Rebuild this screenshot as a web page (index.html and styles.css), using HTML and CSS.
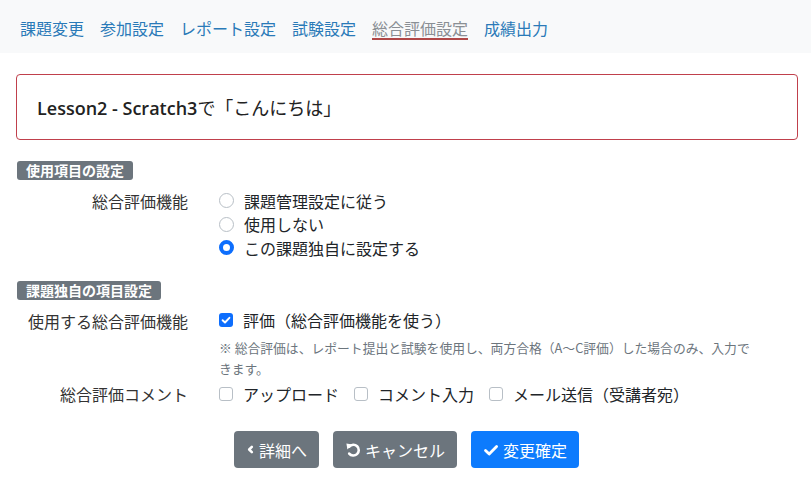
FILE: index.html
```html
<!DOCTYPE html>
<html lang="ja">
<head>
    <meta charset="UTF-8">
    <meta name="viewport" content="width=device-width, initial-scale=1.0">
    <title>総合評価設定</title>
    <link rel="stylesheet" href="styles.css">
</head>
<body>

    <!-- タブ -->
    <nav class="tabs">
        <a href="#">課題変更</a>
        <a href="#">参加設定</a>
        <a href="#">レポート設定</a>
        <a href="#">試験設定</a>
        <a href="#" class="active">総合評価設定</a>
        <a href="#">成績出力</a>
    </nav>

    <div class="main">
        <div class="title-box">
            <h1><span class="latin">Lesson2 - Scratch3</span>で「こんにちは」</h1>
        </div>

        <!-- 使用項目の設定 -->
        <div class="badge">使用項目の設定</div>
        <div class="form-row first">
            <div class="label">総合評価機能</div>
            <div class="value">
                <div class="option"><span class="radio"></span>課題管理設定に従う</div>
                <div class="option"><span class="radio"></span>使用しない</div>
                <div class="option"><span class="radio checked"></span>この課題独自に設定する</div>
            </div>
        </div>

        <!-- 課題独自の項目設定 -->
        <div class="badge second">課題独自の項目設定</div>
        <div class="form-row first">
            <div class="label">使用する総合評価機能</div>
            <div class="value">
                <div class="option">
                    <span class="check checked">
                        <svg viewBox="0 0 14 14" width="14" height="14"><path d="M3.6 7.2 L6 9.5 L10.4 4.8" fill="none" stroke="#fff" stroke-width="1.9" stroke-linecap="round" stroke-linejoin="round"/></svg>
                    </span>評価（総合評価機能を使う）
                </div>
                <p class="note">※ 総合評価は、レポート提出と試験を使用し、両方合格（A〜C評価）した場合のみ、入力できます。</p>
            </div>
        </div>
        <div class="form-row last">
            <div class="label">総合評価コメント</div>
            <div class="value inline">
                <div class="option"><span class="check"></span>アップロード</div>
                <div class="option"><span class="check"></span>コメント入力</div>
                <div class="option"><span class="check"></span>メール送信（受講者宛）</div>
            </div>
        </div>

        <!-- ボタン -->
        <div class="buttons">
            <button class="btn btn-gray">
                <svg viewBox="0 0 10 14" width="9" height="13"><path d="M6.5 4 L3.5 7 L6.5 10" fill="none" stroke="#fff" stroke-width="2.8" stroke-linecap="round" stroke-linejoin="round"/></svg>
                詳細へ
            </button>
            <button class="btn btn-gray">
                <svg viewBox="0 0 16 16" width="16" height="16"><path d="M4.3 4.6 A5.4 5.4 0 1 1 4.2 11.6" fill="none" stroke="#fff" stroke-width="2.6" stroke-linecap="round"/><path d="M1.4 1.6 L7.4 2.6 L2.4 7.6 Z" fill="#fff"/></svg>
                キャンセル
            </button>
            <button class="btn btn-blue">
                <svg viewBox="0 0 16 16" width="16" height="16"><path d="M2.5 8.4 L6.2 12 L13.6 4.4" fill="none" stroke="#fff" stroke-width="2.8" stroke-linecap="round" stroke-linejoin="round"/></svg>
                変更確定
            </button>
        </div>
    </div>

</body>
</html>
```

FILE: styles.css
```css
body {
    margin: 0;
    font-family: "Noto Sans CJK JP", "Noto Sans", sans-serif;
    color: #212529;
    background-color: white;
}
.tabs {
    display: flex;
    align-items: center;
    height: 53px;
    padding-left: 12px;
    background-color: #f8f9fa;
}
.tabs a {
    padding: 4px 8px 0;
    font-size: 16px;
    line-height: 20px;
    color: #2a7ab8;
    text-decoration: none;
    border-bottom: 2px solid transparent;
}
.tabs a.active {
    color: #8a8f94;
    margin: 0 8px;
    padding: 4px 0 0;
    border-bottom-color: #b04848;
}
.main {
    padding: 0 13px 0 16px;
}
.title-box {
    display: flex;
    align-items: center;
    height: 66px;
    box-sizing: border-box;
    margin-top: 21px;
    padding-left: 20px;
    border: 1px solid #c0404c;
    border-radius: 4px;
}
.title-box h1 {
    margin: 0;
    font-size: 18px;
    font-weight: normal;
    line-height: 24px;
    color: #222;
}
.title-box .latin {
    font-family: "Open Sans", sans-serif;
    font-weight: 600;
}
.badge {
    display: inline-block;
    margin: 21px 0 0 1px;
    padding: 0 9px;
    height: 19px;
    line-height: 19px;
    font-size: 14px;
    font-weight: bold;
    color: white;
    background-color: #6c757d;
    border-radius: 3px;
}
.badge.second {
    margin-top: 21px;
}
.form-row {
    display: grid;
    grid-template-columns: 172px 1fr;
    column-gap: 31px;
    font-size: 16px;
    line-height: 24px;
}
.form-row.first {
    margin-top: 8px;
}
.form-row.last {
    margin-top: 3px;
}
.label {
    text-align: right;
    color: #333;
}
.option {
    display: flex;
    align-items: center;
    gap: 10px;
    height: 23.5px;
}
.value.inline {
    display: flex;
    gap: 15px;
}
.radio {
    width: 15px;
    height: 15px;
    box-sizing: border-box;
    border: 1px solid #b8bfc6;
    border-radius: 50%;
    background-color: white;
}
.radio.checked {
    border: 4.5px solid #0d6efd;
}
.check {
    display: flex;
    width: 14px;
    height: 14px;
    box-sizing: border-box;
    border: 1px solid #b8bfc6;
    border-radius: 3px;
}
.check.checked {
    border: none;
    background-color: #0d6efd;
}
.note {
    width: 540px;
    margin: 5px 0 0;
    font-size: 12.8px;
    line-height: 21px;
    color: #6c757d;
}
.buttons {
    display: flex;
    justify-content: center;
    gap: 14px;
    margin-top: 25px;
    padding-right: 1px;
}
.btn {
    display: flex;
    align-items: center;
    gap: 4px;
    height: 37px;
    padding: 0 12px;
    font-family: inherit;
    font-size: 16px;
    color: white;
    border: none;
    border-radius: 4px;
}
.btn-gray {
    background-color: #6c757d;
}
.btn-blue {
    background-color: #0d7bfd;
}
```
